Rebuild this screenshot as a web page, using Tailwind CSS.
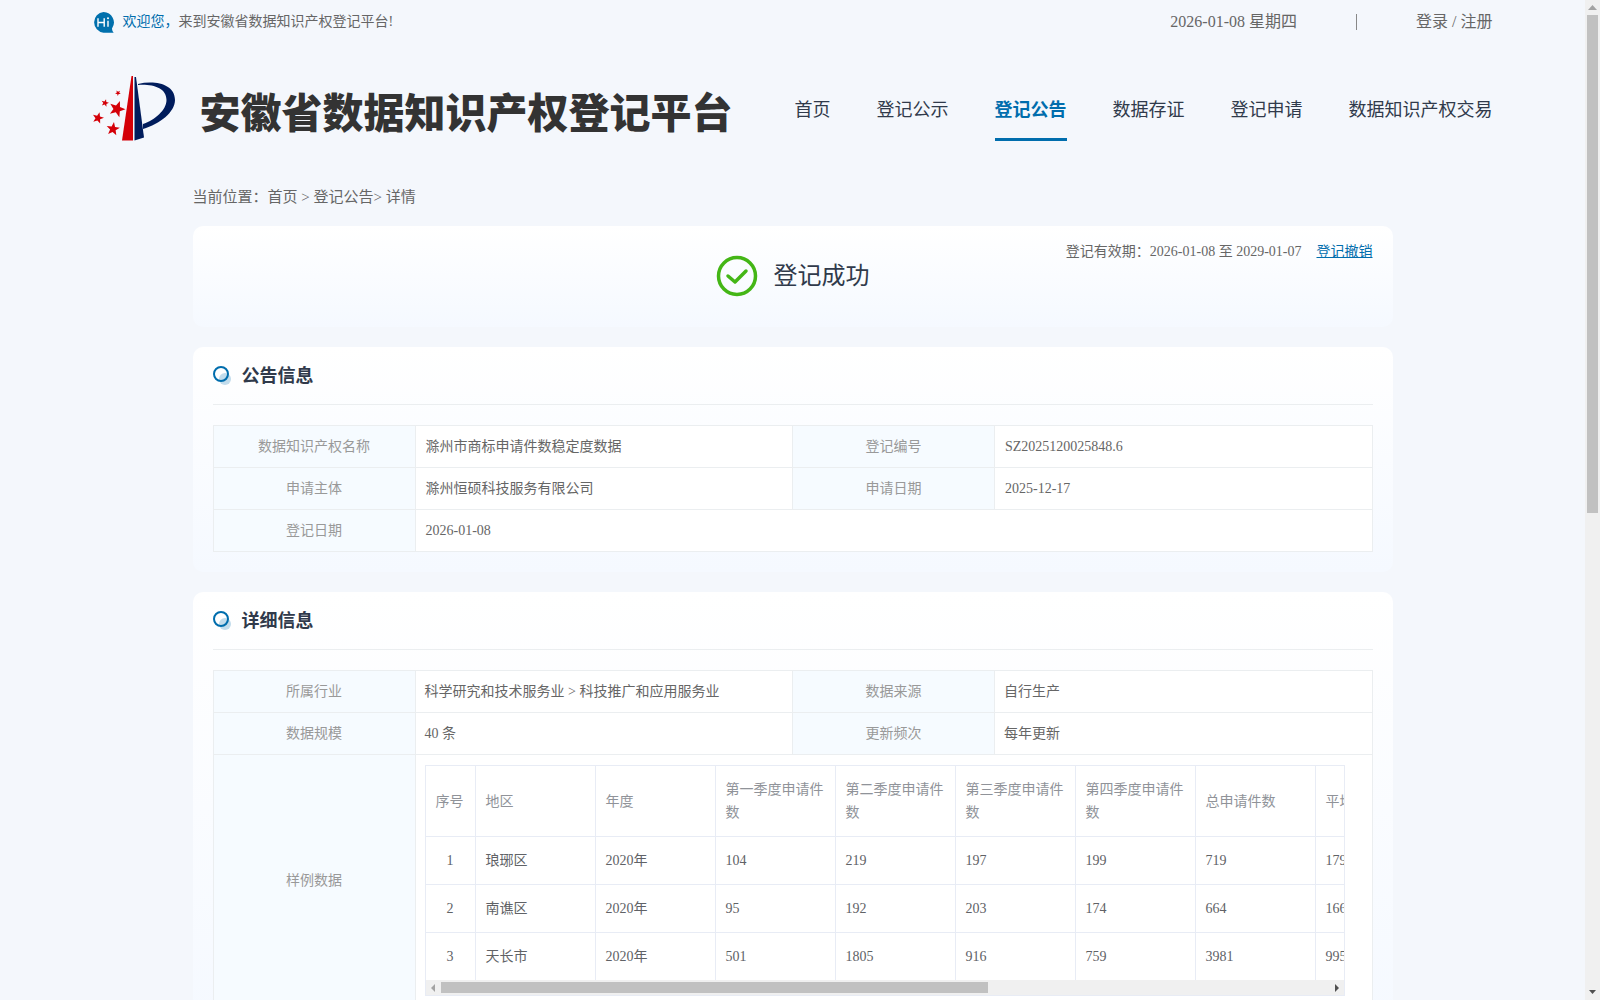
<!DOCTYPE html>
<html lang="zh-CN">
<head>
  <meta charset="UTF-8">
  <title>安徽省数据知识产权登记平台</title>
  <script src="https://cdn.jsdelivr.net/npm/@tailwindcss/browser@4"></script>
</head>
<body class="flex h-screen overflow-hidden bg-[#f4f7fc] font-['Liberation_Serif','Noto_Sans_CJK_SC',serif] text-sm text-[#666]">
  <div class="h-full min-w-0 flex-1 overflow-y-auto [scrollbar-width:none]">
    <header class="mx-auto max-w-[1400px]">
      <!-- Top bar -->
      <div class="flex h-11 items-center justify-between">
        <div class="flex items-center gap-2">
          <svg class="size-[22px]" viewBox="0 0 22 22">
            <path d="M10.500 1a10.500 10.500 0 0 1 8.500 16.500c0 1.600.6 2.700 1.700 4.200H10.500A10.400 10.400 0 0 1 10.500 1z" fill="#0070ad"/>
            <path d="M5 7.300v8.500M11.200 7.300v8.500M5 11.500h6.200M15 9.700v6.100" stroke="#fff" stroke-width="1.400" fill="none"/>
            <circle cx="15" cy="7.300" r="1" fill="#fff"/>
          </svg>
          <p><span class="text-[#006dad]">欢迎您，</span>来到安徽省数据知识产权登记平台!</p>
        </div>
        <div class="flex items-center text-base">
          <span>2026-01-08 星期四</span>
          <span class="mx-[59px] h-4 w-px bg-[#888]"></span>
          <span><a href="#">登录</a> / <a href="#">注册</a></span>
        </div>
      </div>

      <!-- Logo and menu -->
      <div class="flex h-[130px] items-center justify-between">
        <a href="#" class="flex items-center gap-6">
          <svg class="h-[68px] w-[83px]" viewBox="0 -1 83 68">
            <defs>
              <path id="star" d="M0-10L2.500-3.400 9.500-3.100 4 1.300 5.900 8.100 0 4.200-5.900 8.100-4 1.300-9.500-3.100-2.500-3.400z"/>
            </defs>
            <path d="M38.500 0L29 64.500h11V0z" fill="#d40008"/>
            <path d="M41.500 1H43l8 60.500L41.500 64.500z" fill="#001c5c"/>
            <path d="M45 8C62 4 82 8 82 24c0 12-15 24-32 29v-5c12-4 23.500-14 23.500-24C73.500 12 60 8 45 9z" fill="#001c5c"/>
            <g fill="#d40008">
              <use href="#star" transform="translate(25 17) rotate(40) scale(.3)"/>
              <use href="#star" transform="translate(12 27) rotate(15) scale(.4)"/>
              <use href="#star" transform="translate(24 33) rotate(20) scale(.85)"/>
              <use href="#star" transform="translate(5 42) rotate(15) scale(.6)"/>
              <use href="#star" transform="translate(20 53) rotate(8) scale(.7)"/>
            </g>
          </svg>
          <h1 class="pt-0.5 font-['Noto_Sans_CJK_SC',sans-serif] text-[41px] leading-[60px] font-black whitespace-nowrap text-[#333]">安徽省数据知识产权登记平台</h1>
        </a>
        <nav class="flex gap-[46px] text-lg whitespace-nowrap text-[#303a4b]">
          <a href="#" class="border-b-3 border-transparent pt-[18px] pb-3.5">首页</a>
          <a href="#" class="border-b-3 border-transparent pt-[18px] pb-3.5">登记公示</a>
          <a href="#" class="border-b-3 border-[#006dad] pt-[18px] pb-3.5 font-bold text-[#006dad]">登记公告</a>
          <a href="#" class="border-b-3 border-transparent pt-[18px] pb-3.5">数据存证</a>
          <a href="#" class="border-b-3 border-transparent pt-[18px] pb-3.5">登记申请</a>
          <a href="#" class="border-b-3 border-transparent pt-[18px] pb-3.5">数据知识产权交易</a>
        </nav>
      </div>
    </header>

    <main class="mx-auto max-w-[1200px]">
      <div class="mb-1 flex h-12 items-center text-[15px]">
        <p>当前位置：<a href="#">首页</a> &gt; <a href="#">登记公告</a>&gt; 详情</p>
      </div>

      <!-- Status -->
      <section class="relative mb-5 h-[101px] rounded-[10px] bg-linear-to-b from-white to-[#f5f9ff]">
        <div class="flex h-full items-center justify-center gap-4 pb-0.5 text-2xl text-[#303a4b]">
          <svg class="size-[42px]" viewBox="0 0 42 42" fill="none" stroke="#44b616">
            <circle cx="21" cy="21" r="18.500" stroke-width="3.500"/>
            <path d="M12 21l7 6 11-11" stroke-width="3.500" stroke-linecap="round" stroke-linejoin="round"/>
          </svg>
          <h2>登记成功</h2>
        </div>
        <p class="absolute top-4 right-5">登记有效期：2026-01-08 至 2029-01-07<a href="#" class="ml-[15px] text-[#006dad] underline">登记撤销</a></p>
      </section>

      <!-- Announcement -->
      <section class="mb-5 rounded-[10px] bg-linear-to-b from-white to-[#f5f9ff] px-5 pb-5">
        <div class="mb-5 flex h-[58px] items-center gap-2.5 border-b border-[#ebeef0]">
          <svg class="size-[19px]" viewBox="0 0 19 19">
            <circle cx="12" cy="13" r="6" fill="#c2dcec"/>
            <circle cx="8" cy="8" r="7" fill="none" stroke="#006dad" stroke-width="2"/>
          </svg>
          <h3 class="text-lg font-bold text-[#303a4b]">公告信息</h3>
        </div>
        <table class="w-full table-fixed border-collapse bg-white [&_td]:border [&_td]:border-[#ebeef0] [&_td]:px-2.5 [&_th]:border [&_th]:border-[#ebeef0] [&_th]:bg-[#f6fbff] [&_th]:font-normal [&_th]:text-[#999]">
          <colgroup><col class="w-[202px]"><col><col class="w-[202px]"><col></colgroup>
          <tr class="h-[42px]"><th>数据知识产权名称</th><td>滁州市商标申请件数稳定度数据</td><th>登记编号</th><td>SZ2025120025848.6</td></tr>
          <tr class="h-[42px]"><th>申请主体</th><td>滁州恒硕科技服务有限公司</td><th>申请日期</th><td>2025-12-17</td></tr>
          <tr class="h-[42px]"><th>登记日期</th><td colspan="3">2026-01-08</td></tr>
        </table>
      </section>

      <!-- Details -->
      <section class="mb-5 rounded-[10px] bg-linear-to-b from-white to-[#f5f9ff] px-5 pb-5">
        <div class="mb-5 flex h-[58px] items-center gap-2.5 border-b border-[#ebeef0]">
          <svg class="size-[19px]" viewBox="0 0 19 19">
            <circle cx="12" cy="13" r="6" fill="#c2dcec"/>
            <circle cx="8" cy="8" r="7" fill="none" stroke="#006dad" stroke-width="2"/>
          </svg>
          <h3 class="text-lg font-bold text-[#303a4b]">详细信息</h3>
        </div>
        <table class="w-full table-fixed border-collapse bg-white">
          <colgroup><col class="w-[202px]"><col><col class="w-[202px]"><col></colgroup>
          <tr class="h-[42px]">
            <th class="border border-[#ebeef0] bg-[#f6fbff] font-normal text-[#999]">所属行业</th>
            <td class="border border-[#ebeef0] px-[9px]">科学研究和技术服务业 &gt; 科技推广和应用服务业</td>
            <th class="border border-[#ebeef0] bg-[#f6fbff] font-normal text-[#999]">数据来源</th>
            <td class="border border-[#ebeef0] px-[9px]">自行生产</td>
          </tr>
          <tr class="h-[42px]">
            <th class="border border-[#ebeef0] bg-[#f6fbff] font-normal text-[#999]">数据规模</th>
            <td class="border border-[#ebeef0] px-[9px]">40 条</td>
            <th class="border border-[#ebeef0] bg-[#f6fbff] font-normal text-[#999]">更新频次</th>
            <td class="border border-[#ebeef0] px-[9px]">每年更新</td>
          </tr>
          <tr>
            <th class="border border-[#ebeef0] bg-[#f6fbff] font-normal text-[#999]">样例数据</th>
            <td colspan="3" class="border border-[#ebeef0] py-2.5 pr-[27px] pl-[9px]">
              <div class="overflow-hidden border border-[#e8ecf5]">
                <table class="-m-px w-[1011px] table-fixed border-collapse text-[#606266] [&_td]:border [&_td]:border-[#e8ecf5] [&_td]:px-2.5 [&_th]:border [&_th]:border-[#e8ecf5] [&_th]:px-2.5 [&_th]:text-left [&_th]:leading-[23px] [&_th]:font-normal [&_th]:text-[#909399]">
                  <colgroup><col class="w-[50px]"></colgroup>
                  <thead>
                    <tr class="h-[71px]"><th>序号</th><th>地区</th><th>年度</th><th>第一季度申请件数</th><th>第二季度申请件数</th><th>第三季度申请件数</th><th>第四季度申请件数</th><th>总申请件数</th><th>平均</th></tr>
                  </thead>
                  <tbody>
                    <tr class="h-12"><td class="text-center">1</td><td>琅琊区</td><td>2020年</td><td>104</td><td>219</td><td>197</td><td>199</td><td>719</td><td>179</td></tr>
                    <tr class="h-12"><td class="text-center">2</td><td>南谯区</td><td>2020年</td><td>95</td><td>192</td><td>203</td><td>174</td><td>664</td><td>166</td></tr>
                    <tr class="h-12"><td class="text-center">3</td><td>天长市</td><td>2020年</td><td>501</td><td>1805</td><td>916</td><td>759</td><td>3981</td><td>995</td></tr>
                  </tbody>
                </table>
                <div class="flex h-[15px] items-center justify-between bg-[#f0f0f0] px-[5px]">
                  <svg class="h-2 w-1" viewBox="0 0 4 8"><path d="M4 0v8L0 4z" fill="#a3a3a3"/></svg>
                  <div class="mx-1.5 h-[11px] flex-1"><div class="h-full bg-[#c1c1c1]" style="width: 61.700%"></div></div>
                  <svg class="h-2 w-1" viewBox="0 0 4 8"><path d="M0 0v8l4-4z" fill="#505050"/></svg>
                </div>
              </div>
            </td>
          </tr>
        </table>
      </section>
    </main>
  </div>

  <!-- Page scroll bar -->
  <div class="flex w-[15px] flex-col items-center bg-[#f0f0f0]">
    <svg class="h-[15px] w-[15px] shrink-0" viewBox="0 0 15 15"><path d="M3 10h9L7.500 5z" fill="#a3a3a3"/></svg>
    <div class="w-[11px] flex-1"><div class="w-full bg-[#c1c1c1]" style="height: 51.300%"></div></div>
    <svg class="h-[15px] w-[15px] shrink-0" viewBox="0 0 15 15"><path d="M4 5h7L7.500 9z" fill="#505050"/></svg>
  </div>
</body>
</html>
